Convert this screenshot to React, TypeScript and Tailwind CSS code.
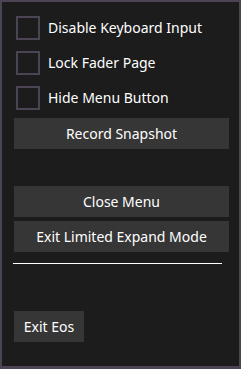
import React from "react";

const OPTIONS = ["Disable Keyboard Input", "Lock Fader Page", "Hide Menu Button"];

const Btn: React.FC<{ label: string; className?: string }> = ({ label, className = "" }) => (
  <button className={`h-[31px] bg-[#363636] text-white text-[14px] leading-none ${className}`}>
    {label}
  </button>
);

export default function App() {
  return (
    <div
      className="w-[241px] h-[369px] bg-[#1c1c1c] border-2 border-b-[3px] border-[#4b4553] flex flex-col pt-[14px] pl-[12px]"
      style={{ fontFamily: '"Noto Sans", "Open Sans", sans-serif' }}
    >
      {/* Toggles */}
      <div className="flex flex-col gap-[11px] pl-[2px]">
        {OPTIONS.map((opt) => (
          <label key={opt} className="flex items-center gap-[8px] h-[24px]">
            <span className="w-[24px] h-[24px] border-2 border-[#4b4553] shrink-0" />
            <span className="text-white text-[14px] leading-none">{opt}</span>
          </label>
        ))}
      </div>

      <Btn label="Record Snapshot" className="w-[215px] mt-[8px]" />

      <div className="flex flex-col gap-[4px] mt-[37px]">
        <Btn label="Close Menu" className="w-[215px]" />
        <Btn label="Exit Limited Expand Mode" className="w-[215px]" />
      </div>

      <div className="h-px w-[209px] bg-white mt-[11px] -ml-px" />

      <Btn label="Exit Eos" className="w-[70px] mt-[47px]" />
    </div>
  );
}
